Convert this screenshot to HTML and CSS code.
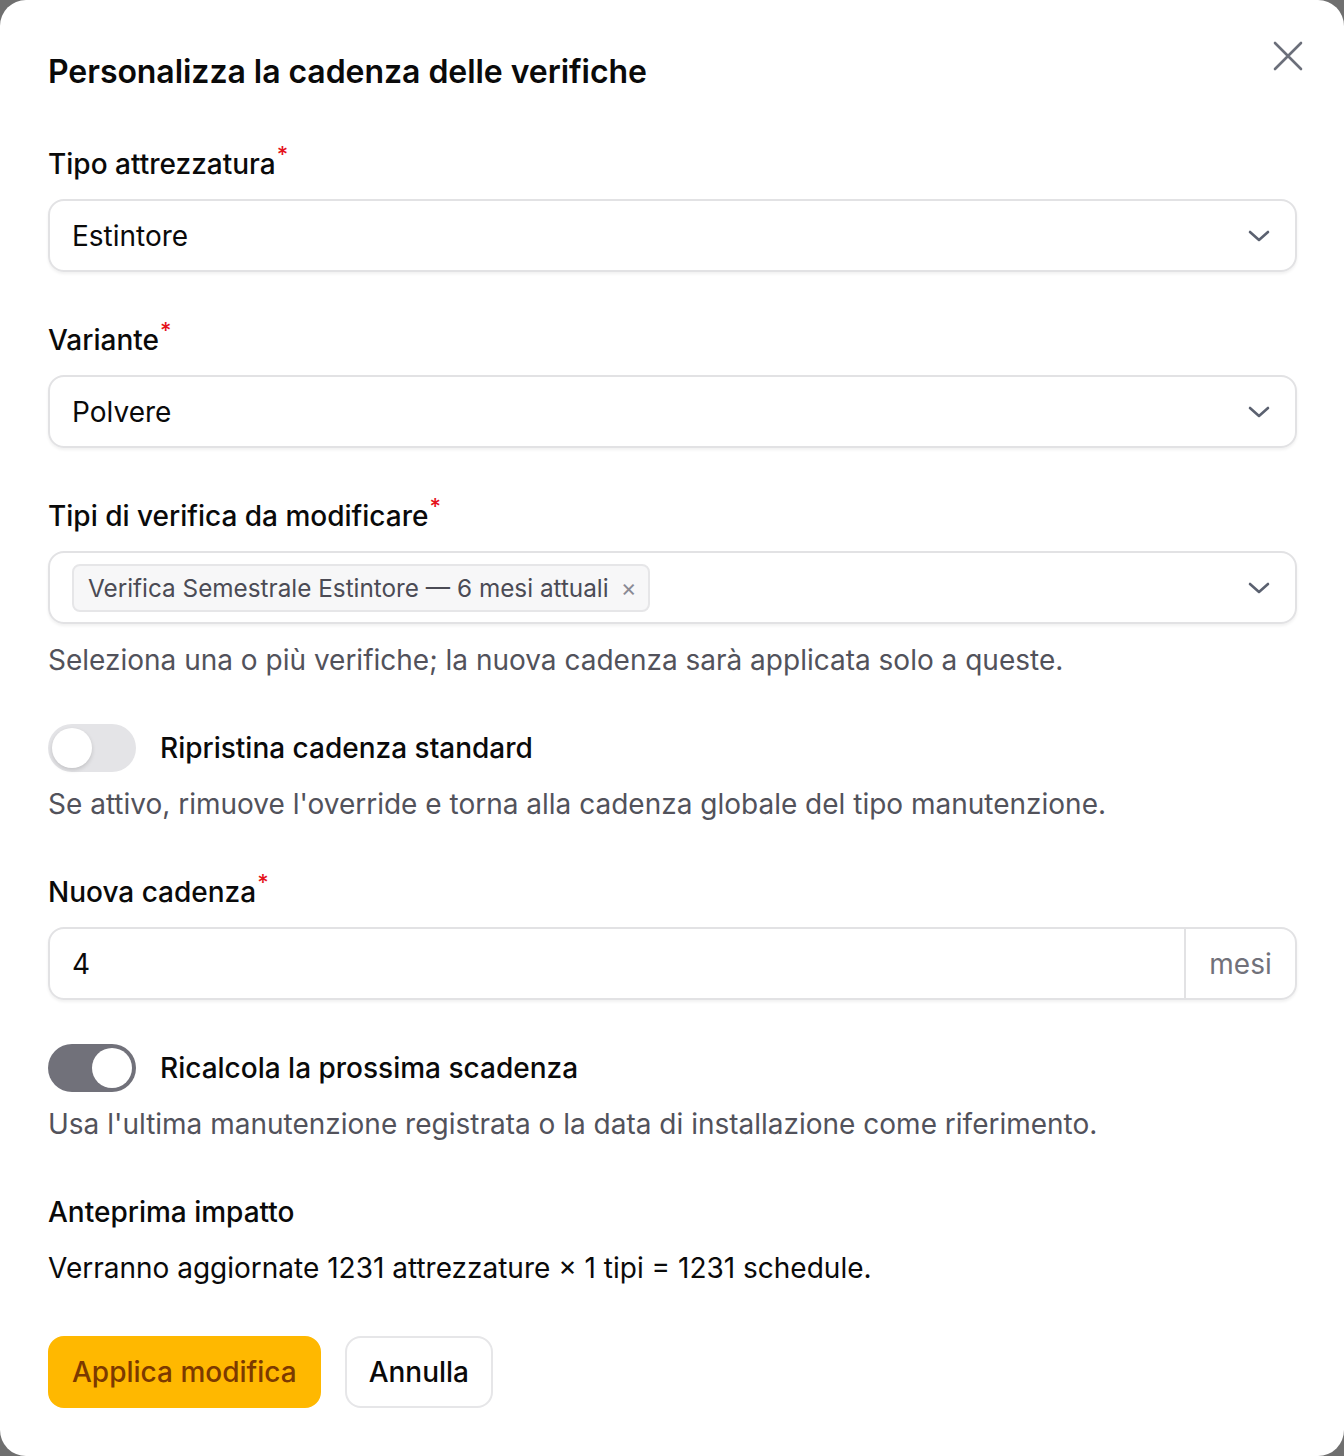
FILE: index.html
```html
<!DOCTYPE html>
<html lang="it">
<head>
<meta charset="utf-8">
<title>Personalizza la cadenza delle verifiche</title>
<link rel="stylesheet" href="styles.css">
</head>
<body>
<div class="modal">
  <button class="close" aria-label="Chiudi">
    <svg width="32" height="32" viewBox="0 0 32 32"><path d="M3 3 L29 29 M29 3 L3 29" stroke="#6b6f7a" stroke-width="2.6" stroke-linecap="round" fill="none"/></svg>
  </button>
  <h1 class="title">Personalizza la cadenza delle verifiche</h1>

  <div class="field">
    <label class="label">Tipo attrezzatura<span class="req">*</span></label>
    <div class="select">
      <span class="value">Estintore</span>
      <svg class="chev" width="22" height="12" viewBox="0 0 22 12"><path d="M2 2 L11 10 L20 2" stroke="#5b6170" stroke-width="2.6" stroke-linecap="round" stroke-linejoin="round" fill="none"/></svg>
    </div>
  </div>

  <div class="field">
    <label class="label">Variante<span class="req">*</span></label>
    <div class="select">
      <span class="value">Polvere</span>
      <svg class="chev" width="22" height="12" viewBox="0 0 22 12"><path d="M2 2 L11 10 L20 2" stroke="#5b6170" stroke-width="2.6" stroke-linecap="round" stroke-linejoin="round" fill="none"/></svg>
    </div>
  </div>

  <div class="field">
    <label class="label">Tipi di verifica da modificare<span class="req">*</span></label>
    <div class="select multi">
      <span class="tag">Verifica Semestrale Estintore — 6 mesi attuali <span class="tag-x">×</span></span>
      <svg class="chev" width="22" height="12" viewBox="0 0 22 12"><path d="M2 2 L11 10 L20 2" stroke="#5b6170" stroke-width="2.6" stroke-linecap="round" stroke-linejoin="round" fill="none"/></svg>
    </div>
    <p class="help">Seleziona una o più verifiche; la nuova cadenza sarà applicata solo a queste.</p>
  </div>

  <div class="field">
    <div class="switch-row">
      <span class="switch"><span class="knob"></span></span>
      <span class="switch-label">Ripristina cadenza standard</span>
    </div>
    <p class="help">Se attivo, rimuove l'override e torna alla cadenza globale del tipo manutenzione.</p>
  </div>

  <div class="field">
    <label class="label">Nuova cadenza<span class="req">*</span></label>
    <div class="input-group">
      <span class="input-val">4</span>
      <span class="addon">mesi</span>
    </div>
  </div>

  <div class="field">
    <div class="switch-row">
      <span class="switch on"><span class="knob"></span></span>
      <span class="switch-label">Ricalcola la prossima scadenza</span>
    </div>
    <p class="help">Usa l'ultima manutenzione registrata o la data di installazione come riferimento.</p>
  </div>

  <div class="preview">
    <h2 class="preview-title">Anteprima impatto</h2>
    <p class="preview-text">Verranno aggiornate 1231 attrezzature × 1 tipi = 1231 schedule.</p>
  </div>

  <div class="actions">
    <button class="btn primary">Applica modifica</button>
    <button class="btn secondary">Annulla</button>
  </div>
</div>
</body>
</html>
```

FILE: styles.css
```css
html, body {
  margin: 0;
  padding: 0;
  background: #6f6f6f;
}
body {
  font-family: Inter, "Noto Sans", "Liberation Sans", sans-serif;
  color: #0a0a0a;
}
.modal {
  position: relative;
  box-sizing: border-box;
  width: 1344px;
  height: 1456px;
  background: #ffffff;
  border-radius: 26px;
  padding: 50px 47px 0 48px;
}
.close {
  position: absolute;
  top: 40px;
  right: 40px;
  width: 32px;
  height: 32px;
  padding: 0;
  border: none;
  background: none;
  display: flex;
}
.title {
  margin: 0 0 50px;
  font-size: 32px;
  line-height: 44px;
  font-weight: 600;
  letter-spacing: -0.05px;
}
.field {
  margin-bottom: 48px;
}
.label {
  display: block;
  font-size: 28px;
  line-height: 40px;
  font-weight: 500;
  margin-bottom: 15px;
}
.req {
  color: #e5121b;
  font-size: 22px;
  line-height: 0;
  vertical-align: 12px;
  margin-left: 1px;
}
.select {
  box-sizing: border-box;
  height: 73px;
  border: 2px solid #e2e2e4;
  border-radius: 16px;
  box-shadow: 0 2px 3px rgba(0,0,0,0.06);
  display: flex;
  align-items: center;
  justify-content: space-between;
  padding: 0 25px 0 22px;
}
.value {
  font-size: 28px;
  color: #0a0a0a;
}
.chev {
  display: block;
}
.tag {
  box-sizing: border-box;
  height: 48px;
  display: inline-flex;
  align-items: center;
  gap: 12px;
  padding: 0 11px 0 14px;
  background: #f7f7f8;
  border: 2px solid #e6e6e8;
  border-radius: 8px;
  font-size: 24.3px;
  color: #4b4b55;
}
.tag-x {
  color: #8a8a94;
  font-size: 24px;
}
.help {
  margin: 16px 0 0;
  font-size: 28px;
  line-height: 40px;
  color: #52525b;
}
.switch-row {
  display: flex;
  align-items: center;
  gap: 24px;
  height: 40px;
}
.switch {
  flex: none;
  box-sizing: border-box;
  width: 88px;
  height: 48px;
  border-radius: 24px;
  background: #e4e4e7;
  padding: 4px;
  display: flex;
}
.switch .knob {
  width: 40px;
  height: 40px;
  border-radius: 50%;
  background: #ffffff;
  box-shadow: 0 2px 4px rgba(0,0,0,0.15);
}
.switch.on {
  background: #71717a;
  justify-content: flex-end;
}
.switch.on .knob {
  box-shadow: none;
}
.switch-label {
  font-size: 28px;
  line-height: 40px;
  font-weight: 500;
}
.input-group {
  box-sizing: border-box;
  height: 73px;
  border: 2px solid #e2e2e4;
  border-radius: 16px;
  box-shadow: 0 2px 3px rgba(0,0,0,0.06);
  display: flex;
  align-items: stretch;
}
.input-val {
  flex: 1;
  display: flex;
  align-items: center;
  padding-left: 22px;
  font-size: 28px;
}
.addon {
  width: 109px;
  border-left: 2px solid #e2e2e4;
  display: flex;
  align-items: center;
  justify-content: center;
  font-size: 28px;
  color: #71717a;
}
.preview-title {
  margin: 0;
  font-size: 28px;
  line-height: 40px;
  font-weight: 500;
}
.preview-text {
  margin: 16px 0 0;
  font-size: 28px;
  line-height: 40px;
}
.actions {
  margin-top: 48px;
  display: flex;
  gap: 24px;
}
.btn {
  box-sizing: border-box;
  height: 72px;
  border-radius: 16px;
  font-family: inherit;
  font-size: 28px;
  font-weight: 500;
  padding: 0 22px;
  white-space: nowrap;
}
.primary {
  background: #ffb800;
  border: 2px solid #ffb800;
  color: #7c3a00;
}
.secondary {
  background: #ffffff;
  border: 2px solid #e6e6e8;
  color: #0a0a0a;
}
```
